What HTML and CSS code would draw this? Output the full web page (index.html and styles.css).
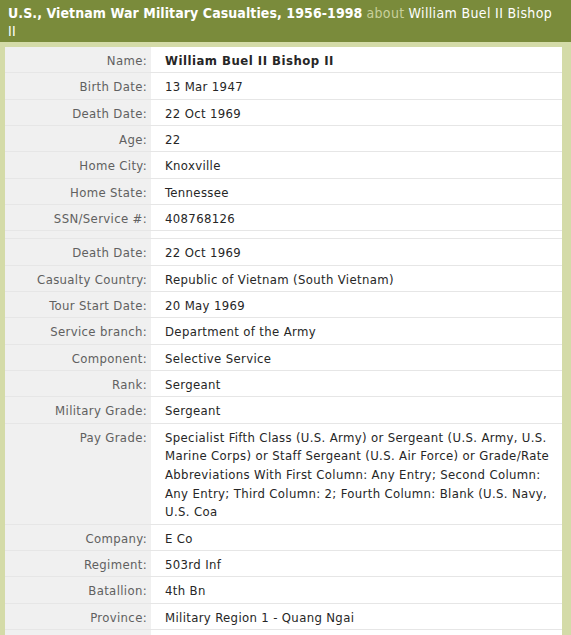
FILE: index.html
```html
<!DOCTYPE html>
<html>
<head>
<meta charset="utf-8">
<link rel="stylesheet" href="styles.css">
</head>
<body>
<div class="record">
  <h1 class="title"><b>U.S., Vietnam War Military Casualties, 1956-1998</b> <span class="about">about</span> <span class="who">William Buel II Bishop II</span></h1>
  <div class="frame">
    <table class="facts">
      <tr><th>Name:</th><td class="name">William Buel II Bishop II</td></tr>
      <tr><th>Birth Date:</th><td>13 Mar 1947</td></tr>
      <tr><th>Death Date:</th><td>22 Oct 1969</td></tr>
      <tr><th>Age:</th><td>22</td></tr>
      <tr><th>Home City:</th><td>Knoxville</td></tr>
      <tr><th>Home State:</th><td>Tennessee</td></tr>
      <tr><th>SSN/Service #:</th><td>408768126</td></tr>
      <tr class="spacer"><th></th><td></td></tr>
      <tr><th>Death Date:</th><td>22 Oct 1969</td></tr>
      <tr><th>Casualty Country:</th><td>Republic of Vietnam (South Vietnam)</td></tr>
      <tr><th>Tour Start Date:</th><td>20 May 1969</td></tr>
      <tr><th>Service branch:</th><td>Department of the Army</td></tr>
      <tr><th>Component:</th><td>Selective Service</td></tr>
      <tr><th>Rank:</th><td>Sergeant</td></tr>
      <tr><th>Military Grade:</th><td>Sergeant</td></tr>
      <tr><th>Pay Grade:</th><td>Specialist Fifth Class (U.S. Army) or Sergeant (U.S. Army, U.S. Marine Corps) or Staff Sergeant (U.S. Air Force) or Grade/Rate Abbreviations With First Column: Any Entry; Second Column: Any Entry; Third Column: 2; Fourth Column: Blank (U.S. Navy, U.S. Coa</td></tr>
      <tr><th>Company:</th><td>E Co</td></tr>
      <tr><th>Regiment:</th><td>503rd Inf</td></tr>
      <tr><th>Batallion:</th><td>4th Bn</td></tr>
      <tr><th>Province:</th><td>Military Region 1 - Quang Ngai</td></tr>
      <tr><th></th><td></td></tr>
    </table>
  </div>
</div>
</body>
</html>
```

FILE: styles.css
```css
html, body {
  margin: 0;
  padding: 0;
  background: #ffffff;
}
body {
  font-family: "DejaVu Sans Condensed", "DejaVu Sans", sans-serif;
  font-size: 13px;
  overflow: hidden;
  height: 635px;
}
.record {
  width: 571px;
}
.title {
  margin: 0;
  background: #7a8b3b;
  color: #ffffff;
  font-size: 14px;
  font-weight: normal;
  line-height: 18px;
  padding: 4px 18px 2px 8px;
  height: 36px;
}
.title b {
  font-weight: bold;
  letter-spacing: 0.08px;
}
.title .about,
.title .who {
  letter-spacing: 0.35px;
}
.title .about {
  color: #c9d09c;
}
.frame {
  background: #d4dba8;
  padding: 5px 9px 0 5px;
}
.facts {
  width: 100%;
  border-collapse: collapse;
  background: #ffffff;
}
.facts th,
.facts td {
  line-height: 18.67px;
  height: 18.67px;
  padding: 5px 0 1.66px;
  border-bottom: 1px solid #e6e6e6;
  vertical-align: top;
  letter-spacing: 0.35px;
}
.facts th {
  width: 142px;
  background: #f0f0f0;
  color: #606060;
  font-weight: normal;
  text-align: right;
  padding-right: 4px;
}
.facts td {
  color: #262626;
  padding-left: 14px;
  padding-right: 10px;
}
.facts td.name {
  font-weight: bold;
  letter-spacing: 0.5px;
}
.facts .spacer th,
.facts .spacer td {
  padding: 0;
  height: 7px;
  line-height: 0;
}
```
